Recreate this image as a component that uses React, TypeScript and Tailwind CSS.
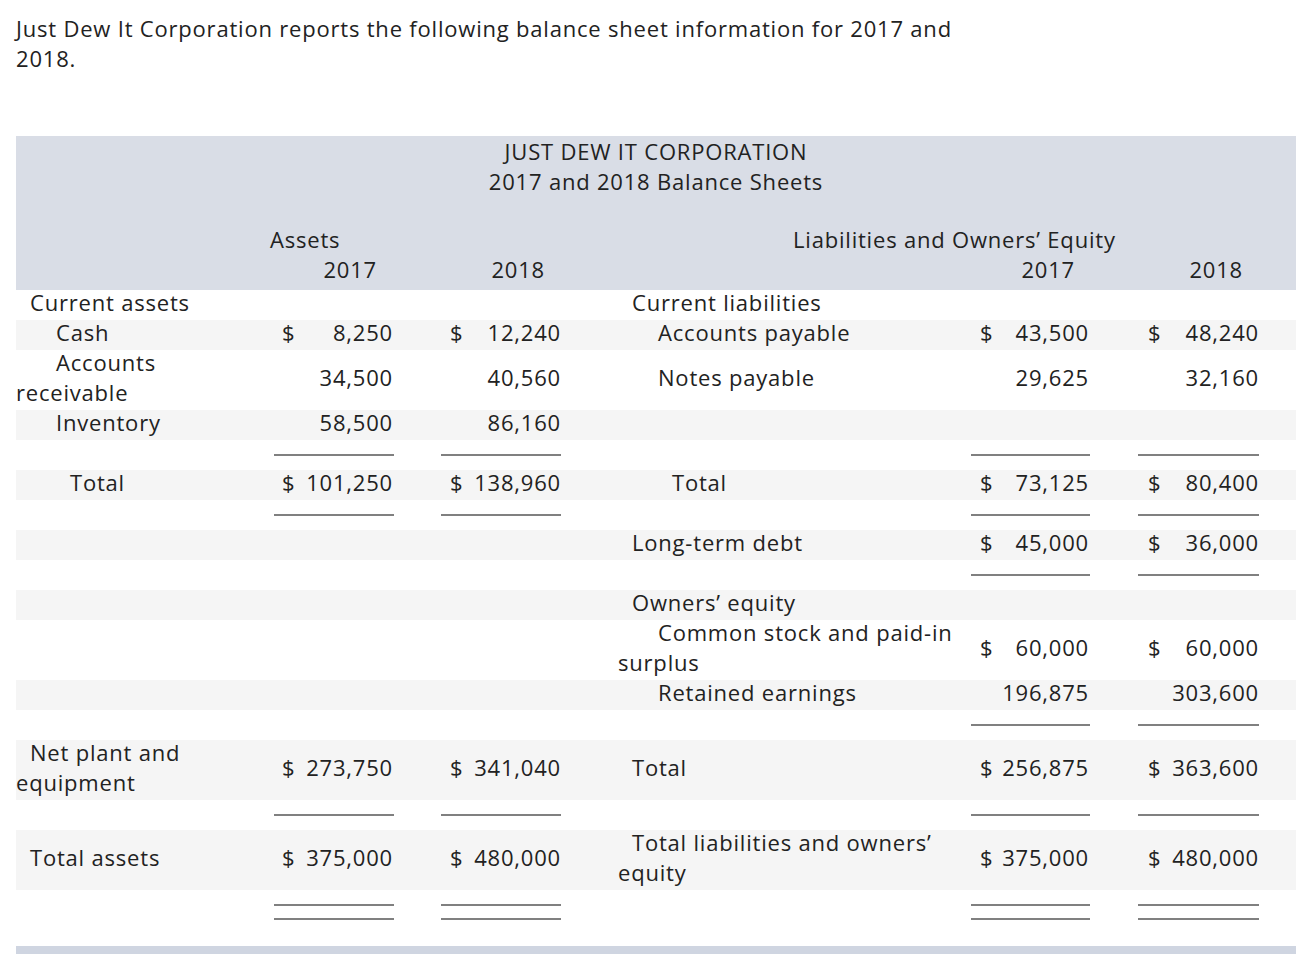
import React from "react";

type Cell = { text?: string; dollar?: boolean; indent?: number };
type Row = {
  kind: "data" | "line" | "double";
  gray?: boolean;
  left?: Cell;
  a17?: Cell;
  a18?: Cell;
  right?: Cell;
  l17?: Cell;
  l18?: Cell;
  lines?: ("a17" | "a18" | "l17" | "l18")[];
};

const GRID = "grid grid-cols-[250px_137px_168px_395px_133px_197px]";

const indentClass: Record<number, string> = {
  14: "indent-[14px]",
  40: "indent-[40px]",
  54: "indent-[54px]",
};

function Label({ cell, right }: { cell?: Cell; right?: boolean }) {
  if (!cell) return <div />;
  return (
    <div className={`${right ? "pl-[47px] pr-[2px]" : "pr-[40px]"} flex items-center`}>
      <div className={`${indentClass[cell.indent ?? 14]} leading-[30px] -mt-[3px] mb-[3px]`}>{cell.text}</div>
    </div>
  );
}

function Num({ cell, pad }: { cell?: Cell; pad: string }) {
  if (!cell) return <div />;
  return (
    <div className={`flex items-center justify-between ${pad}`}>
      <span className="-mt-[3px] mb-[3px]">{cell.dollar ? "$" : ""}</span>
      <span className="-mt-[3px] mb-[3px]">{cell.text}</span>
    </div>
  );
}

const PADS = {
  a17: "pl-[16px] pr-[10px]",
  a18: "pl-[47px] pr-[10px]",
  l17: "pl-[14px] pr-[10px]",
  l18: "pl-[49px] pr-[37px]",
};

const LINEPADS = {
  a17: "pl-[8px] pr-[9px]",
  a18: "pl-[38px] pr-[10px]",
  l17: "pl-[5px] pr-[9px]",
  l18: "pl-[39px] pr-[37px]",
};

function LineCell({ on, which, double }: { on: boolean; which: keyof typeof LINEPADS; double?: boolean }) {
  if (!on) return <div />;
  return (
    <div className={`${LINEPADS[which]} flex flex-col`}>
      <div className="h-[2px] bg-[#808080]" />
      {double && <div className="h-[2px] bg-[#808080] mt-[12px]" />}
    </div>
  );
}

const rows: Row[] = [
  { kind: "data", left: { text: "Current assets", indent: 14 }, right: { text: "Current liabilities", indent: 14 } },
  {
    kind: "data",
    gray: true,
    left: { text: "Cash", indent: 40 },
    a17: { text: "8,250", dollar: true },
    a18: { text: "12,240", dollar: true },
    right: { text: "Accounts payable", indent: 40 },
    l17: { text: "43,500", dollar: true },
    l18: { text: "48,240", dollar: true },
  },
  {
    kind: "data",
    left: { text: "Accounts receivable", indent: 40 },
    a17: { text: "34,500" },
    a18: { text: "40,560" },
    right: { text: "Notes payable", indent: 40 },
    l17: { text: "29,625" },
    l18: { text: "32,160" },
  },
  {
    kind: "data",
    gray: true,
    left: { text: "Inventory", indent: 40 },
    a17: { text: "58,500" },
    a18: { text: "86,160" },
  },
  { kind: "line", lines: ["a17", "a18", "l17", "l18"] },
  {
    kind: "data",
    gray: true,
    left: { text: "Total", indent: 54 },
    a17: { text: "101,250", dollar: true },
    a18: { text: "138,960", dollar: true },
    right: { text: "Total", indent: 54 },
    l17: { text: "73,125", dollar: true },
    l18: { text: "80,400", dollar: true },
  },
  { kind: "line", lines: ["a17", "a18", "l17", "l18"] },
  {
    kind: "data",
    gray: true,
    right: { text: "Long-term debt", indent: 14 },
    l17: { text: "45,000", dollar: true },
    l18: { text: "36,000", dollar: true },
  },
  { kind: "line", lines: ["l17", "l18"] },
  { kind: "data", gray: true, right: { text: "Owners\u2019 equity", indent: 14 } },
  {
    kind: "data",
    right: { text: "Common stock and paid-in surplus", indent: 40 },
    l17: { text: "60,000", dollar: true },
    l18: { text: "60,000", dollar: true },
  },
  {
    kind: "data",
    gray: true,
    right: { text: "Retained earnings", indent: 40 },
    l17: { text: "196,875" },
    l18: { text: "303,600" },
  },
  { kind: "line", lines: ["l17", "l18"] },
  {
    kind: "data",
    gray: true,
    left: { text: "Net plant and equipment", indent: 14 },
    a17: { text: "273,750", dollar: true },
    a18: { text: "341,040", dollar: true },
    right: { text: "Total", indent: 14 },
    l17: { text: "256,875", dollar: true },
    l18: { text: "363,600", dollar: true },
  },
  { kind: "line", lines: ["a17", "a18", "l17", "l18"] },
  {
    kind: "data",
    gray: true,
    left: { text: "Total assets", indent: 14 },
    a17: { text: "375,000", dollar: true },
    a18: { text: "480,000", dollar: true },
    right: { text: "Total liabilities and owners\u2019 equity", indent: 14 },
    l17: { text: "375,000", dollar: true },
    l18: { text: "480,000", dollar: true },
  },
  { kind: "double", lines: ["a17", "a18", "l17", "l18"] },
];

function TableRow({ row }: { row: Row }) {
  if (row.kind === "line" || row.kind === "double") {
    const l = row.lines ?? [];
    const dbl = row.kind === "double";
    return (
      <div className={`${GRID} ${dbl ? "h-[56px] pt-[14px]" : "h-[30px] pt-[14px]"} ${row.gray ? "bg-[#f5f5f5]" : ""}`}>
        <div />
        <LineCell on={l.includes("a17")} which="a17" double={dbl} />
        <LineCell on={l.includes("a18")} which="a18" double={dbl} />
        <div />
        <LineCell on={l.includes("l17")} which="l17" double={dbl} />
        <LineCell on={l.includes("l18")} which="l18" double={dbl} />
      </div>
    );
  }
  return (
    <div className={`${GRID} min-h-[30px] ${row.gray ? "bg-[#f5f5f5]" : ""}`}>
      <Label cell={row.left} />
      <Num cell={row.a17} pad={PADS.a17} />
      <Num cell={row.a18} pad={PADS.a18} />
      <Label cell={row.right} right />
      <Num cell={row.l17} pad={PADS.l17} />
      <Num cell={row.l18} pad={PADS.l18} />
    </div>
  );
}

export default function App() {
  return (
    <div
      className="bg-white min-h-[974px] px-[16px] pt-[13px] text-[#222222] text-[22px] leading-[30px] tracking-[0.8px]"
      style={{ fontFamily: "'Open Sans', Lato, sans-serif" }}
    >
      <p className="max-w-[975px] leading-[30px]">
        Just Dew It Corporation reports the following balance sheet information for 2017 and 2018.
      </p>
      <div className="mt-[63px] w-[1280px]">
        <div className="bg-[#d9dde6] h-[154px] flex flex-col">
          <div className="text-center leading-[30px]">JUST DEW IT CORPORATION</div>
          <div className="text-center leading-[30px]">2017 and 2018 Balance Sheets</div>
          <div className={`${GRID} mt-[28px] leading-[30px]`}>
            <div />
            <div className="col-span-2 pl-[4px]">Assets</div>
            <div className="col-span-3 pl-[222px]">Liabilities and Owners&#8217; Equity</div>
          </div>
          <div className={`${GRID} leading-[30px]`}>
            <div />
            <div className="text-right pr-[26px]">2017</div>
            <div className="text-right pr-[26px]">2018</div>
            <div />
            <div className="text-right pr-[24px]">2017</div>
            <div className="text-right pr-[53px]">2018</div>
          </div>
        </div>
        {rows.map((r, i) => (
          <TableRow key={i} row={r} />
        ))}
        <div className="h-[8px] bg-[#cfd5e1]" />
      </div>
    </div>
  );
}
